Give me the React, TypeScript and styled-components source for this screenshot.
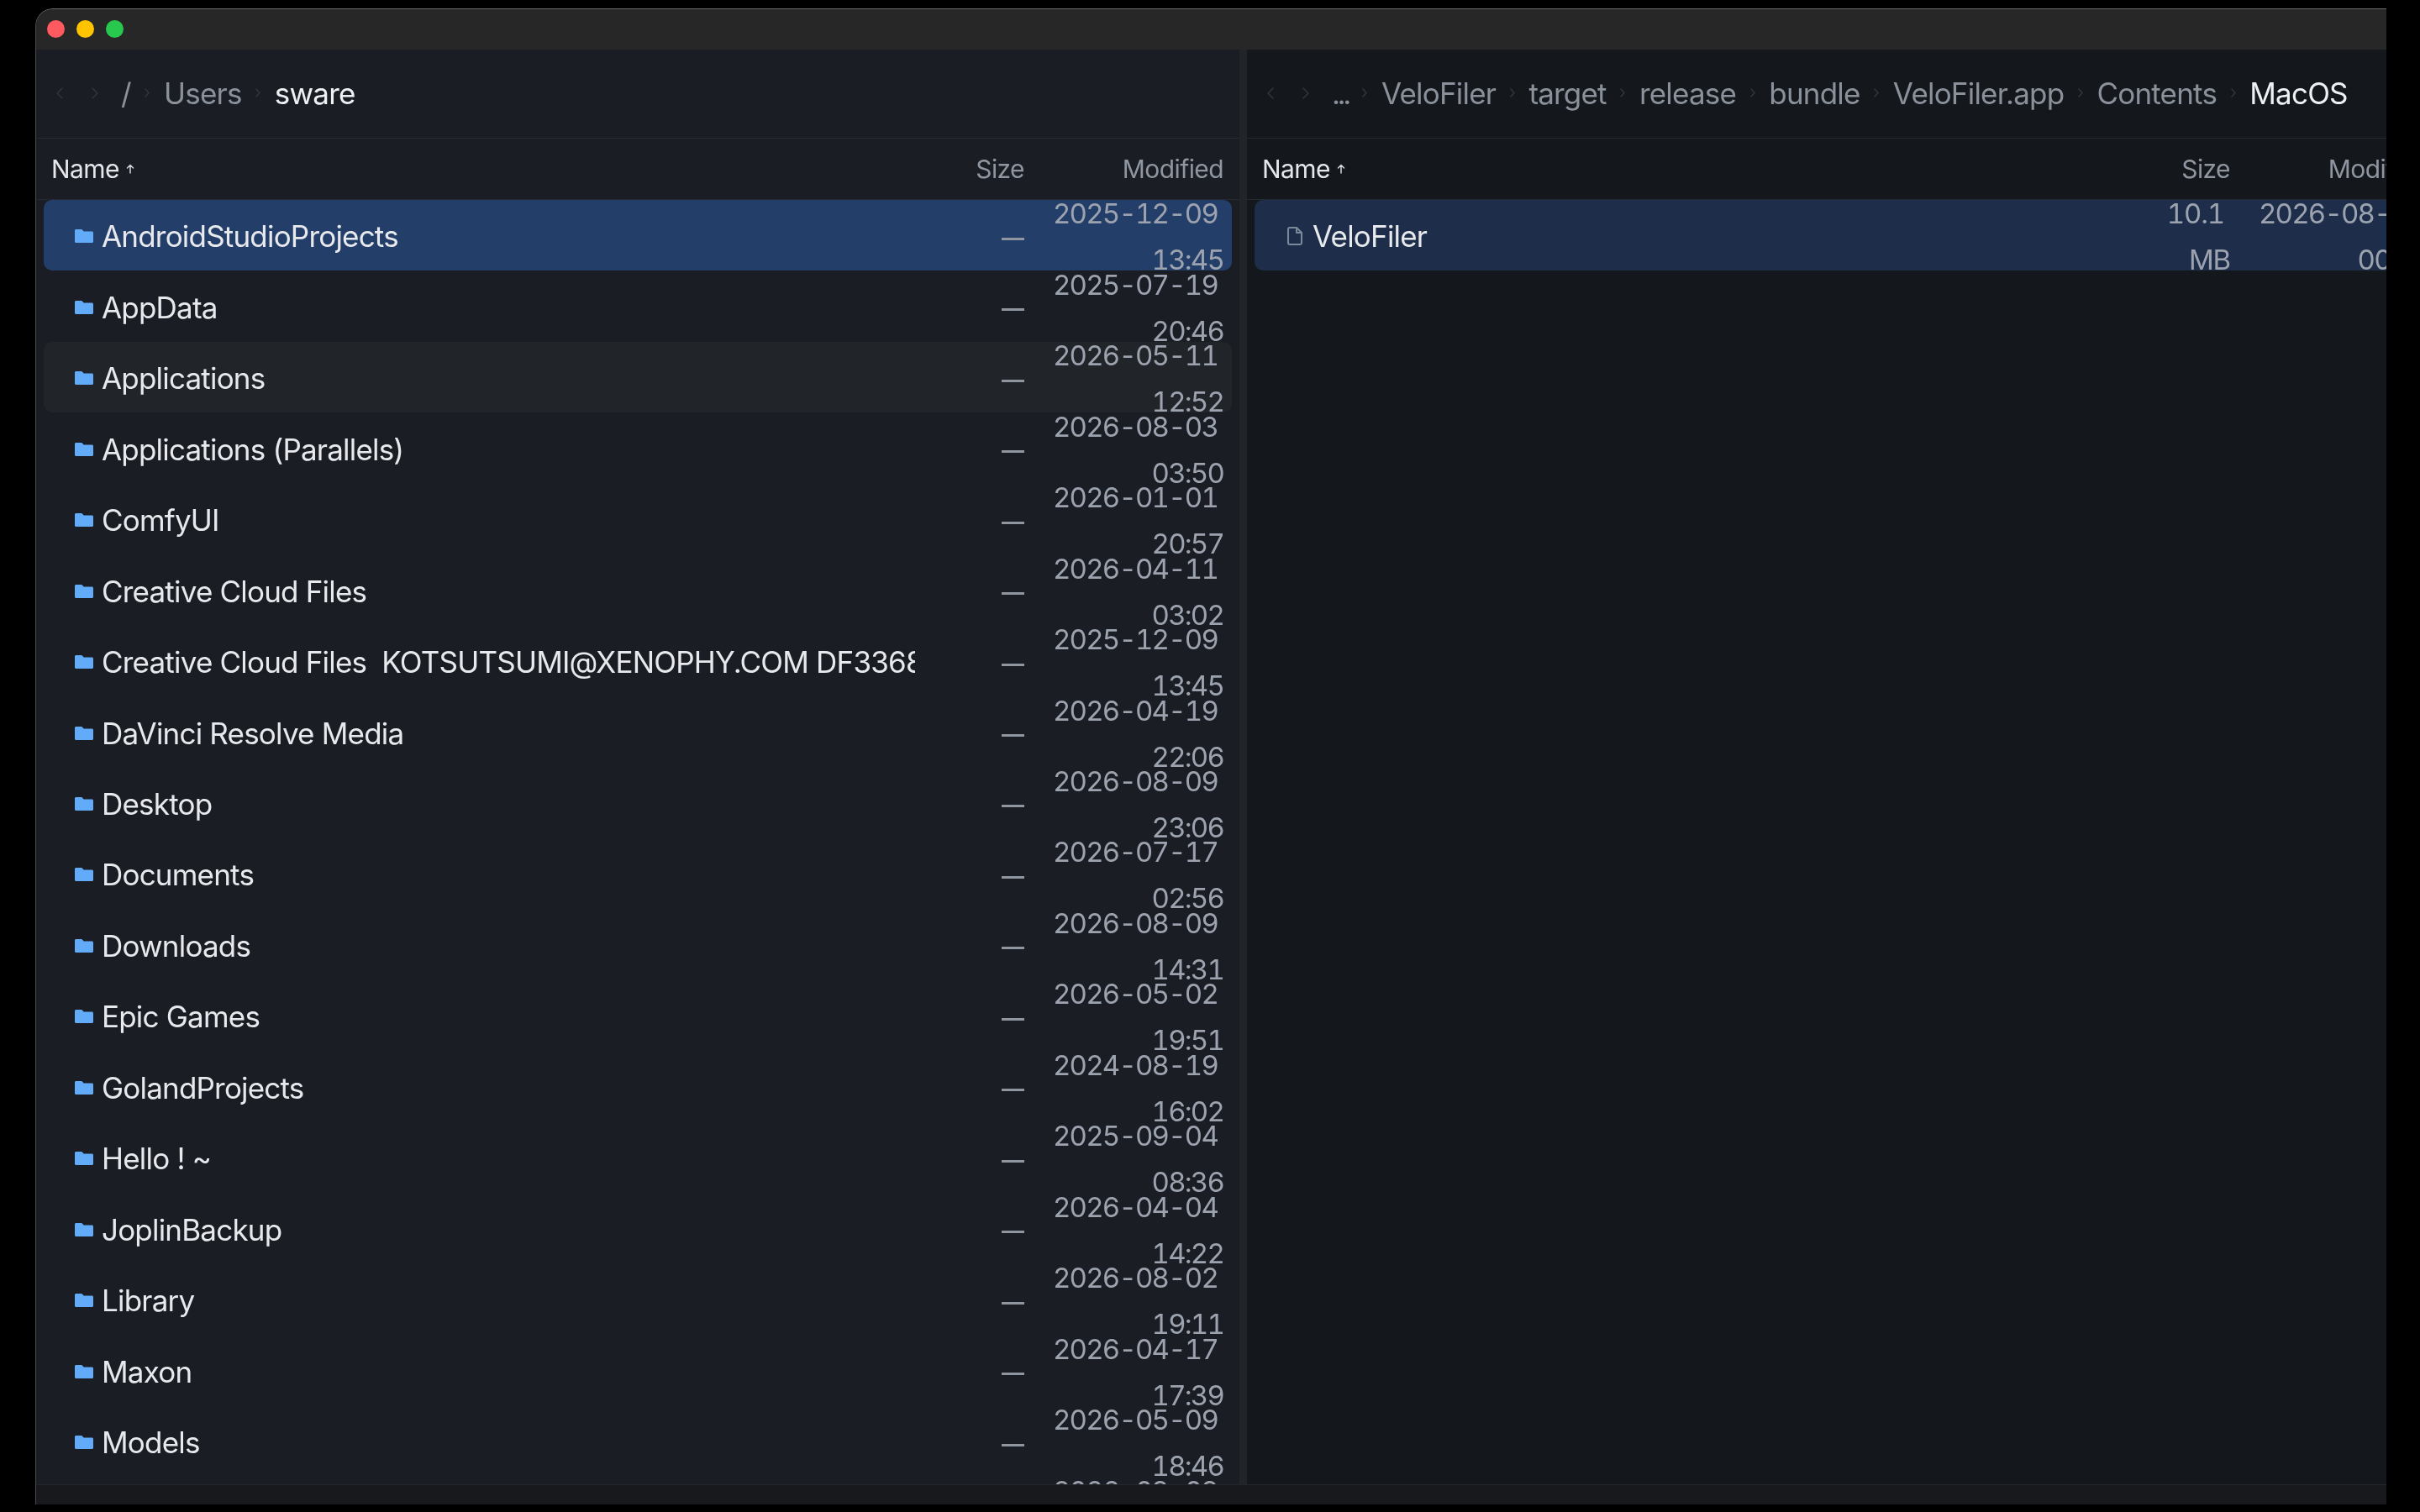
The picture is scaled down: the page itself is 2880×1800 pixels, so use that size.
import React from "react";
import styled, { createGlobalStyle } from "styled-components";

const Global = createGlobalStyle`
  html, body { margin: 0; padding: 0; background: #000; width: 2880px; height: 1800px; overflow: hidden; }
  * { box-sizing: border-box; }
`;

const Page = styled.div`
  width: 2880px;
  height: 1800px;
  padding: 11px 40px 9px 43px;
  background: #000;
  font-family: Inter, "Noto Sans", sans-serif;
`;

const Window = styled.div`
  width: 100%;
  height: 100%;
  display: flex;
  flex-direction: column;
  overflow: hidden;
  border-radius: 20px 0 0 0;
  box-shadow: 0 -1px 0 #6c6c6c, -1px 0 0 #4a4a4a;
  background: #17191d;
  filter: blur(0.6px);
`;

const TitleBar = styled.div`
  flex: 0 0 48px;
  display: flex;
  align-items: center;
  gap: 14px;
  padding: 0 0 2px 13px;
  background: #272727;
`;

const Light = styled.span<{ $color: string }>`
  width: 21px;
  height: 21px;
  border-radius: 50%;
  background: ${(p) => p.$color};
`;

const Panes = styled.div`
  flex: 1;
  min-height: 0;
  display: flex;
  background: #212428;
`;

const Pane = styled.section<{ $width: number; $active: boolean }>`
  flex: 0 0 ${(p) => p.$width}px;
  display: flex;
  flex-direction: column;
  min-height: 0;
  overflow: hidden;
  background: ${(p) => (p.$active ? "#1a1d23" : "#14171c")};
`;

const Divider = styled.div`
  flex: 0 0 9px;
`;

const Breadcrumb = styled.nav`
  flex: 0 0 106px;
  display: flex;
  align-items: center;
  padding: 0 0 2px 7px;
  border-bottom: 1px solid #262a30;
`;

const NavButton = styled.span`
  flex: 0 0 42px;
  display: flex;
  justify-content: center;
  align-items: center;
  color: #30353c;
`;

const Crumbs = styled.div`
  display: flex;
  align-items: center;
  gap: 16.6px;
  margin-left: 10px;
  white-space: nowrap;
`;

const Crumb = styled.span<{ $current?: boolean }>`
  font-size: 35px;
  line-height: 48px;
  letter-spacing: -0.8px;
  color: ${(p) => (p.$current ? "#eef0f3" : "#8a919b")};
`;

const Ellipsis = styled(Crumb)`
  letter-spacing: -3.5px;
`;

const CrumbSep = styled.span`
  display: flex;
  color: #30353c;
`;

const ColumnHeader = styled.div`
  flex: 0 0 73px;
  display: grid;
  grid-template-columns: 1fr 130px 237px;
  align-items: center;
  padding: 0 19px 0 18px;
  border-bottom: 1px solid #262a30;
  font-size: 30px;
  letter-spacing: -0.6px;
  color: #8f96a0;
`;

const NameHead = styled.span`
  display: flex;
  align-items: center;
  gap: 8px;
  color: #e5e7eb;
`;

const NumHead = styled.span`
  text-align: right;
`;

const List = styled.div`
  flex: 1;
  min-height: 0;
  overflow: hidden;
  padding: 0 9px;
`;

const Row = styled.div<{ $state?: "selected" | "selectedDim" | "hover" }>`
  height: 84.47px;
  display: grid;
  grid-template-columns: 1fr 130px 237px;
  grid-template-rows: minmax(0, 1fr);
  align-items: center;
  padding: 4px 10px 0 37px;
  border-radius: 10px;
  background: ${(p) =>
    p.$state === "selected"
      ? "#243e6a"
      : p.$state === "selectedDim"
      ? "#1d2d4a"
      : p.$state === "hover"
      ? "#212429"
      : "transparent"};
`;

const NameCell = styled.div`
  min-width: 0;
  display: flex;
  align-items: center;
  gap: 10px;
  overflow: hidden;
`;

const IconSlot = styled.span`
  flex: 0 0 22px;
  display: flex;
  justify-content: center;
  margin-top: -2px;
`;

const FileName = styled.span`
  font-size: 35px;
  line-height: 48px;
  letter-spacing: -0.8px;
  white-space: pre;
  color: #e7e9ed;
  position: relative;
  top: -1px;
`;

const SizeCell = styled.div`
  padding-left: 30px;
  text-align: right;
  font-size: 33px;
  line-height: 55px;
  letter-spacing: -1.2px;
  color: #9ca3af;
  font-variant-numeric: tabular-nums;
`;

const FirstLine = styled.span`
  display: block;
  padding-right: 7px;
  white-space: nowrap;
`;

const Dash = styled.span`
  display: block;
  margin: 4px 0 0 auto;
  width: 27px;
  height: 3px;
  background: #8f96a0;
`;

const DateCell = styled.div`
  padding-left: 30px;
  text-align: right;
  font-size: 33px;
  line-height: 55px;
  letter-spacing: -1.8px;
  color: #9ca3af;
  white-space: nowrap;
  font-variant-numeric: tabular-nums;
`;

const Footer = styled.div`
  flex: 0 0 24px;
  background: #17191d;
  border-top: 1px solid #24272c;
`;

const Chevron = ({ dir, small }: { dir: "l" | "r"; small?: boolean }) => {
  const w = small ? 6 : 8;
  const h = small ? 11 : 14;
  const d =
    dir === "l"
      ? `M${w - 1} 1L1 ${h / 2}L${w - 1} ${h - 1}`
      : `M1 1L${w - 1} ${h / 2}L1 ${h - 1}`;
  return (
    <svg width={w} height={h} viewBox={`0 0 ${w} ${h}`} fill="none" stroke="currentColor" strokeWidth="1.6" strokeLinecap="round" strokeLinejoin="round">
      <path d={d} />
    </svg>
  );
};

const SortArrow = () => (
  <svg width="10" height="12" viewBox="0 0 10 12" fill="none" stroke="#d5d8de" strokeWidth="1.5" strokeLinecap="round" strokeLinejoin="round">
    <path d="M5 11V1.5M1.5 5L5 1.5L8.5 5" />
  </svg>
);

const FolderIcon = () => (
  <svg width="22" height="16" viewBox="0 0 22 16">
    <path
      d="M1.5 0H7.5C8.3 0 8.9 .3 9.4 .9L10.6 2.500H20.5C21.3 2.5 22 3.2 22 4V14.5C22 15.3 21.3 16 20.5 16H1.5C.7 16 0 15.3 0 14.5V1.5C0 .7 .7 0 1.5 0Z"
      fill="#62abf8"
    />
  </svg>
);

const FileIcon = () => (
  <svg width="18" height="22" viewBox="0 0 18 22" fill="none" stroke="#7b8a9a" strokeWidth="2" strokeLinejoin="round">
    <path d="M3 1H11L17 7V19C17 20.1 16.1 21 15 21H3C1.9 21 1 20.1 1 19V3C1 1.900 1.900 1 3 1Z" />
    <path d="M11 1V7H17" />
  </svg>
);

type Entry = {
  name: string;
  date: string;
  time: string;
  state?: "selected" | "selectedDim" | "hover";
  size?: [string, string];
  file?: boolean;
};

const leftEntries: Entry[] = [
  { name: "AndroidStudioProjects", date: "2025-12-09", time: "13:45", state: "selected" },
  { name: "AppData", date: "2025-07-19", time: "20:46" },
  { name: "Applications", date: "2026-05-11", time: "12:52", state: "hover" },
  { name: "Applications (Parallels)", date: "2026-08-03", time: "03:50" },
  { name: "ComfyUI", date: "2026-01-01", time: "20:57" },
  { name: "Creative Cloud Files", date: "2026-04-11", time: "03:02" },
  { name: "Creative Cloud Files  KOTSUTSUMI@XENOPHY.COM DF3368", date: "2025-12-09", time: "13:45" },
  { name: "DaVinci Resolve Media", date: "2026-04-19", time: "22:06" },
  { name: "Desktop", date: "2026-08-09", time: "23:06" },
  { name: "Documents", date: "2026-07-17", time: "02:56" },
  { name: "Downloads", date: "2026-08-09", time: "14:31" },
  { name: "Epic Games", date: "2026-05-02", time: "19:51" },
  { name: "GolandProjects", date: "2024-08-19", time: "16:02" },
  { name: "Hello ! ~", date: "2025-09-04", time: "08:36" },
  { name: "JoplinBackup", date: "2026-04-04", time: "14:22" },
  { name: "Library", date: "2026-08-02", time: "19:11" },
  { name: "Maxon", date: "2026-04-17", time: "17:39" },
  { name: "Models", date: "2026-05-09", time: "18:46" },
  { name: "Movies", date: "2026-03-03", time: "10:12" },
];

const rightEntries: Entry[] = [
  { name: "VeloFiler", date: "2026-08-09", time: "00:14", state: "selectedDim", size: ["10.1", "MB"], file: true },
];

const FileRow = ({ entry }: { entry: Entry }) => (
  <Row $state={entry.state}>
    <NameCell>
      <IconSlot>{entry.file ? <FileIcon /> : <FolderIcon />}</IconSlot>
      <FileName>{entry.name}</FileName>
    </NameCell>
    <SizeCell>
      {entry.size ? (
        <>
          <FirstLine>{entry.size[0]}</FirstLine>
          {entry.size[1]}
        </>
      ) : (
        <Dash />
      )}
    </SizeCell>
    <DateCell>
      <FirstLine>{entry.date}</FirstLine>
      {entry.time}
    </DateCell>
  </Row>
);

const FilePane = ({ width, active, crumbs, entries }: { width: number; active: boolean; crumbs: string[]; entries: Entry[] }) => (
  <Pane $width={width} $active={active}>
    <Breadcrumb>
      <NavButton><Chevron dir="l" /></NavButton>
      <NavButton><Chevron dir="r" /></NavButton>
      <Crumbs>
        {crumbs.map((c, i) => (
          <React.Fragment key={c}>
            {i > 0 && <CrumbSep><Chevron dir="r" small /></CrumbSep>}
            {c === "..." ? <Ellipsis>{c}</Ellipsis> : <Crumb $current={i === crumbs.length - 1}>{c}</Crumb>}
          </React.Fragment>
        ))}
      </Crumbs>
    </Breadcrumb>
    <ColumnHeader>
      <NameHead>Name <SortArrow /></NameHead>
      <NumHead>Size</NumHead>
      <NumHead>Modified</NumHead>
    </ColumnHeader>
    <List>
      {entries.map((e) => (
        <FileRow key={e.name + e.date} entry={e} />
      ))}
    </List>
  </Pane>
);

export default function App() {
  return (
    <Page>
      <Global />
      <Window>
        <TitleBar>
          <Light $color="#ff5a5f" />
          <Light $color="#ffc400" />
          <Light $color="#28c84f" />
        </TitleBar>
        <Panes>
          <FilePane width={1432} active crumbs={["/", "Users", "sware"]} entries={leftEntries} />
          <Divider />
          <FilePane
            width={1426}
            active={false}
            crumbs={["...", "VeloFiler", "target", "release", "bundle", "VeloFiler.app", "Contents", "MacOS"]}
            entries={rightEntries}
          />
        </Panes>
        <Footer />
      </Window>
    </Page>
  );
}
